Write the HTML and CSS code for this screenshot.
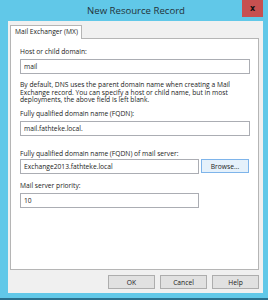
FILE: index.html
```html
<!DOCTYPE html>
<html lang="en">
<head>
  <meta charset="UTF-8">
  <title>New Resource Record</title>
  <link rel="stylesheet" href="styles.css">
</head>
<body>
  <div class="window">
    <!-- Title bar -->
    <div class="titlebar">
      <span class="title">New Resource Record</span>
      <span class="close">x</span>
    </div>

    <div class="client">
      <div class="tabs">
        <div class="tab active">Mail Exchanger (MX)</div>
      </div>

      <div class="panel">
        <label class="field-label" for="host">Host or child domain:</label>
        <input type="text" id="host" class="field" value="mail">

        <p class="hint">By default, DNS uses the parent domain name when creating a Mail Exchange record. You can specify a host or child name, but in most deployments, the above field is left blank.</p>

        <label class="field-label gap-sm" for="fqdn">Fully qualified domain name (FQDN):</label>
        <input type="text" id="fqdn" class="field readonly" value="mail.fathteke.local." readonly>

        <label class="field-label gap-lg" for="server">Fully qualified domain name (FQDN) of mail server:</label>
        <div class="row">
          <input type="text" id="server" class="field short" value="Exchange2013.fathteke.local">
          <button type="button" class="btn browse">Browse...</button>
        </div>

        <label class="field-label gap-md" for="priority">Mail server priority:</label>
        <input type="text" id="priority" class="field short" value="10">
      </div>

      <div class="actions">
        <button type="button" class="btn">OK</button>
        <button type="button" class="btn">Cancel</button>
        <button type="button" class="btn">Help</button>
      </div>
    </div>
  </div>
</body>
</html>
```

FILE: styles.css
```css
body {
  margin: 0;
  padding: 0;
  font-family: "Open Sans", "Noto Sans", sans-serif;
  font-size: 6.7px;
  color: #1a1a1a;
  background: #5fc7e7;
}

.window {
  width: 268px;
  height: 300px;
  display: flex;
  flex-direction: column;
  background: #61c8e8;
  border-bottom: 2px solid #2a6f8c;
  box-sizing: border-box;
}

.titlebar {
  height: 21px;
  flex: none;
  position: relative;
  display: flex;
  justify-content: center;
  align-items: center;
}

.title {
  font-size: 9.6px;
  color: #23333a;
  padding-left: 4px;
}

.close {
  position: absolute;
  top: 0;
  right: 5px;
  width: 21px;
  height: 17px;
  background: #c75050;
  color: #111;
  font-family: "DejaVu Sans", sans-serif;
  font-weight: bold;
  font-size: 8px;
  display: flex;
  align-items: center;
  justify-content: center;
}

.client {
  flex: 1;
  margin: 0 5px 5px 8px;
  background: #f0f0f0;
  padding: 4px 4px 0 2px;
  display: flex;
  flex-direction: column;
}

.tabs {
  display: flex;
  height: 13px;
  flex: none;
}

.tab {
  width: 72px;
  height: 14px;
  box-sizing: border-box;
  border: 1px solid #b5b5b5;
  border-bottom: none;
  background: #fff;
  padding-left: 4px;
  line-height: 12px;
  position: relative;
  z-index: 1;
}

.panel {
  height: 232px;
  flex: none;
  box-sizing: border-box;
  background: #fff;
  border: 1px solid #b5b5b5;
  padding: 9px 9px 0 9px;
  display: flex;
  flex-direction: column;
  align-items: flex-start;
}

.field-label {
  display: block;
  line-height: 8px;
  margin-bottom: 3px;
}

.gap-sm {
  margin-top: 6px;
}

.gap-md {
  margin-top: 8px;
}

.gap-lg {
  margin-top: 14px;
  margin-bottom: 1px;
}

.field {
  width: 230px;
  height: 15px;
  box-sizing: border-box;
  border: 1px solid #abadb3;
  background: #fff;
  font-family: inherit;
  font-size: 6.7px;
  color: #1a1a1a;
  padding: 0 3px;
  margin: 0;
}

.field.short {
  width: 179px;
}

.hint {
  margin: 7px 0 0;
  line-height: 7.5px;
  width: 230px;
}

.row {
  display: flex;
  gap: 2px;
  align-items: center;
}

.btn {
  height: 14px;
  box-sizing: border-box;
  border: 1px solid #adadad;
  background: #e1e1e1;
  font-family: inherit;
  font-size: 6.7px;
  color: #1a1a1a;
  padding: 0;
  margin: 0;
}

.browse {
  width: 48px;
  border-color: #7eb4ea;
  background: #e5f1fb;
}

.actions {
  display: flex;
  justify-content: flex-end;
  gap: 5px;
  padding-top: 5px;
}

.actions .btn {
  width: 47px;
}
```
